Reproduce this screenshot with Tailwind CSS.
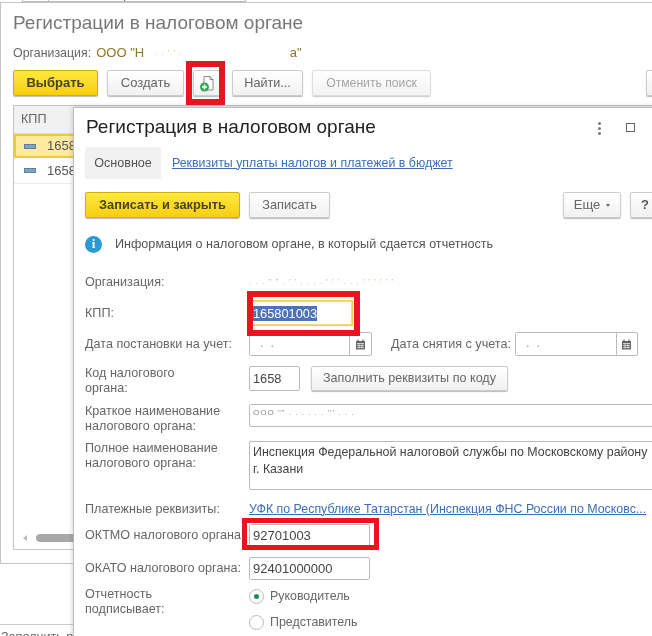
<!doctype html>
<html lang="ru"><head><meta charset="utf-8">
<script src="https://cdn.jsdelivr.net/npm/@tailwindcss/browser@4"></script>
</head>
<body class="bg-white">
<div class="relative w-[652px] h-[636px] overflow-hidden bg-white font-['Liberation_Sans',Arial,sans-serif] text-[12.6px] text-[#555] blur-[0.35px]">

  <!-- strip behind -->
  <div class="absolute left-[22px] top-[-10px] w-[224px] h-[12px] border border-[#bbb] flex text-[#666] overflow-hidden whitespace-nowrap leading-[10px]">
    <span class="w-[26px] border-r border-[#bbb]"></span>
    <span class="pl-[12px] text-[12px]">Заполнить реквизиты по КПП</span>
  </div>

  <!-- back window -->
  <div class="absolute left-0 top-[2px] w-[680px] h-[562px] border border-[#c4c4c4] bg-white pl-[12px] pt-[10px]">
    <div class="text-[19px] leading-[20px] text-[#787878]">Регистрации в налоговом органе</div>
    <div class="mt-[10px] h-[20px] flex items-center whitespace-nowrap"><span class="text-[#666] text-[12.4px]">Организация:</span><span class="ml-[5px] text-[#8f7424] text-[13px]">ООО "Н</span><span class="ml-[11px] text-[#c9b070] tracking-[1px] text-[8px]">. . ' ' .</span><span class="ml-[107px] text-[#8f7424] text-[13px]">а"</span></div>
    <div class="mt-[7px] flex items-start h-[26px] [&>*]:shrink-0">
      <div class="w-[85px] h-[26px] rounded-[2px] border border-[#d3ad0c] bg-gradient-to-b from-[#ffe83c] to-[#f6cf0a] shadow-[0_1px_1px_#bbb] flex items-center justify-center font-bold text-[13px] text-[#4a4320]">Выбрать</div>
      <div class="ml-[9px] w-[77px] h-[26px] rounded-[2px] border border-[#ccc] bg-gradient-to-b from-white to-[#f1f1f1] shadow-[0_1px_1px_#bbb] flex items-center justify-center text-[13px] text-[#666]">Создать</div>
      <div class="ml-[9px] w-[28px] h-[26px] rounded-[2px] border border-[#ccc] bg-gradient-to-b from-white to-[#f1f1f1] shadow-[0_1px_1px_#bbb] flex items-center justify-center">
        <svg width="16" height="17" viewBox="0 0 16 17"><path d="M5 1.500h6l3 3v10.500H5z" fill="#fff" stroke="#8a8a8a"/><path d="M11 1.500v3h3" fill="#e4e4e4" stroke="#8a8a8a"/><circle cx="5.500" cy="12" r="4.500" fill="#35a853"/><path d="M3 12h5M5.500 9.500v5" stroke="#fff" stroke-width="1.500"/></svg>
      </div>
      <div class="ml-[11px] w-[71px] h-[26px] rounded-[2px] border border-[#ccc] bg-gradient-to-b from-white to-[#f1f1f1] shadow-[0_1px_1px_#bbb] flex items-center justify-center text-[#666]">Найти...</div>
      <div class="ml-[9px] w-[119px] h-[26px] rounded-[2px] border border-[#ddd] bg-gradient-to-b from-white to-[#f3f3f3] shadow-[0_1px_1px_#ccc] flex items-center justify-center text-[12.2px] text-[#a5a5a5]">Отменить поиск</div>
      <div class="ml-[215px] w-[40px] h-[26px] rounded-[2px] border border-[#ccc] bg-gradient-to-b from-white to-[#f1f1f1] shadow-[0_1px_1px_#bbb]"></div>
    </div>
    <!-- table -->
    <div class="mt-[9px] w-[650px] h-[445px] border border-[#c4c4c4] relative">
      <div class="h-[28px] bg-[#f1f1f1] border-b border-[#ddd] pl-[7px] flex items-center text-[#666]">КПП</div>
      <div class="h-[24px] bg-[#fde9a0] border-2 border-[#f3c63f] flex items-center pl-[8px] text-[#555]"><span class="w-[12px] h-[5px] bg-[#7fa5c4] border border-[#5f7f9a]"></span><span class="ml-[11px] text-[13px]">1658</span></div>
      <div class="h-[26px] border-b border-[#eee] flex items-center pl-[10px] text-[#555]"><span class="w-[12px] h-[5px] bg-[#7fa5c4] border border-[#5f7f9a]"></span><span class="ml-[11px] text-[13px]">1658</span></div>
      <div class="absolute left-[9px] bottom-[7px] flex items-center">
        <span class="w-0 h-0 border-y-[3px] border-y-transparent border-r-[4px] border-r-[#bbb]"></span>
        <span class="ml-[9px] w-[60px] h-[8px] rounded-full bg-[#a8a8a8]"></span>
      </div>
    </div>
  </div>

  <!-- bottom strip -->
  <div class="absolute left-0 top-[624px] w-[73px] h-[20px] border-t border-[#ccc] pl-[1px] pt-[3px] text-[#666] whitespace-nowrap overflow-hidden">Заполнить ре</div>

  <!-- front window -->
  <div class="absolute left-[73px] top-[107px] w-[600px] h-[540px] bg-white border-t border-l border-[#bdbdbd] shadow-[0_0_6px_rgba(0,0,0,0.2)] pl-[11px] text-[#666]">
    <div class="h-[38px] flex items-center relative">
      <span class="ml-[1px] text-[19px] text-[#222]">Регистрация в налоговом органе</span>
      <span class="absolute left-[513px] top-[14px] flex flex-col gap-[2px]"><i class="block w-[3px] h-[3px] rounded-full bg-[#777]"></i><i class="block w-[3px] h-[3px] rounded-full bg-[#777]"></i><i class="block w-[3px] h-[3px] rounded-full bg-[#777]"></i></span>
      <span class="absolute left-[541px] top-[15px] w-[9px] h-[9px] border border-[#666]"></span>
    </div>
    <div class="flex items-center h-[32px] mt-[1px]">
      <div class="w-[76px] h-[32px] bg-[#f1f1f1] rounded-[2px] flex items-center justify-center text-[#555]">Основное</div>
      <a class="ml-[11px] text-[12.4px] text-[#3a6fb7] underline">Реквизиты уплаты налогов и платежей в бюджет</a>
    </div>
    <div class="flex mt-[13px] h-[26px]">
      <div class="w-[155px] rounded-[2px] border border-[#d3ad0c] bg-gradient-to-b from-[#ffe83c] to-[#f6cf0a] shadow-[0_1px_1px_#bbb] flex items-center justify-center font-bold text-[12.8px] text-[#4a4320]">Записать и закрыть</div>
      <div class="ml-[9px] w-[81px] rounded-[2px] border border-[#ccc] bg-gradient-to-b from-white to-[#f1f1f1] shadow-[0_1px_1px_#bbb] flex items-center justify-center text-[12.8px]">Записать</div>
      <div class="ml-[233px] w-[58px] rounded-[2px] border border-[#ccc] bg-gradient-to-b from-white to-[#f1f1f1] shadow-[0_1px_1px_#bbb] flex items-center justify-center gap-[6px] text-[13px]">Еще<span class="w-0 h-0 border-x-[2.500px] border-x-transparent border-t-[3px] border-t-[#666]"></span></div>
      <div class="ml-[9px] w-[40px] rounded-[2px] border border-[#ccc] bg-gradient-to-b from-white to-[#f1f1f1] shadow-[0_1px_1px_#bbb] flex items-center pl-[10px] font-bold text-[13px] text-[#555]">?</div>
    </div>
    <div class="flex items-center h-[18px] mt-[17px]">
      <span class="w-[17px] h-[17px] rounded-full bg-[#2a9bd0] text-white flex items-center justify-center font-['Liberation_Serif',serif] font-bold text-[13px]">i</span>
      <span class="ml-[13px] text-[#555]">Информация о налоговом органе, в который сдается отчетность</span>
    </div>

    <div class="flex items-center h-[20px] mt-[19px]">
      <span class="w-[164px]">Организация:</span>
      <span class="text-[#c9b070] text-[8px] tracking-[1px]">. . . " " . ' ' . . . . ' ' ' . . . ' ' ' ' ' '</span>
    </div>
    <div class="flex items-center h-[26px] mt-[8px]">
      <span class="w-[164px]">КПП:</span>
      <div class="w-[104px] h-[26px] border border-[#f3cd4d] shadow-[inset_0_0_0_1px_#f8dc7a] pl-[3px] flex items-center text-[12.8px]"><span class="bg-[#4d72b8] text-white leading-[15px]">165801003</span></div>
    </div>
    <div class="flex items-center h-[24px] mt-[6px]">
      <span class="w-[164px] whitespace-nowrap">Дата постановки на учет:</span>
      <div class="w-[123px] h-[24px] rounded-[2px] border border-[#bbb] flex">
        <span class="flex-1 pl-[10px] leading-[20px] text-[#999]">. &nbsp;.</span>
        <span class="w-[22px] border-l border-[#bbb] flex items-center justify-center">
          <svg width="11" height="11" viewBox="0 0 11 11"><path d="M1 2h9v8.500H1z" fill="#666"/><path d="M2 4.500h7M2 6.500h7M2 8.500h7M4 4v5.500M7 4v5.500" stroke="#eee" stroke-width=".7"/><path d="M3 .5v2M8 .5v2" stroke="#444"/></svg>
        </span>
      </div>
      <span class="ml-[19px] whitespace-nowrap">Дата снятия с учета:</span>
      <div class="ml-[4px] w-[123px] h-[24px] rounded-[2px] border border-[#bbb] flex">
        <span class="flex-1 pl-[10px] leading-[20px] text-[#999]">. &nbsp;.</span>
        <span class="w-[21px] border-l border-[#bbb] flex items-center justify-center">
          <svg width="11" height="11" viewBox="0 0 11 11"><path d="M1 2h9v8.500H1z" fill="#666"/><path d="M2 4.500h7M2 6.500h7M2 8.500h7M4 4v5.500M7 4v5.500" stroke="#eee" stroke-width=".7"/><path d="M3 .5v2M8 .5v2" stroke="#444"/></svg>
        </span>
      </div>
    </div>
    <div class="flex h-[32px] mt-[10px]">
      <span class="w-[164px] leading-[15px]">Код налогового<br>органа:</span>
      <div class="w-[51px] h-[25px] rounded-[2px] border border-[#bbb] pl-[3px] leading-[23px] text-[12.8px] text-[#444]">1658</div>
      <div class="ml-[11px] w-[197px] h-[25px] rounded-[2px] border border-[#ccc] bg-gradient-to-b from-white to-[#f1f1f1] shadow-[0_1px_1px_#bbb] flex items-center justify-center">Заполнить реквизиты по коду</div>
    </div>
    <div class="flex h-[37px] mt-[6px]">
      <span class="w-[164px] leading-[15px]">Краткое наименование<br>налогового органа:</span>
      <div class="w-[420px] h-[23px] border border-[#bbb] rounded-[2px] pl-[3px] text-[8px] leading-[16px] text-[#888] tracking-[1px]">ООО "" . . . . . . ''' . . .</div>
    </div>
    <div class="flex h-[48px]">
      <span class="w-[164px] leading-[15px]">Полное наименование<br>налогового органа:</span>
      <div class="w-[420px] h-[49px] border border-[#bbb] rounded-[2px] pl-[3px] pt-[2px] leading-[17px] text-[12.4px] text-[#444]">Инспекция Федеральной налоговой службы по Московскому району<br>г. Казани</div>
    </div>
    <div class="flex items-center h-[20px] mt-[10px] whitespace-nowrap">
      <span class="w-[164px]">Платежные реквизиты:</span>
      <a class="text-[12.4px] text-[#3a6fb7] underline">УФК по Республике Татарстан (Инспекция ФНС России по Московс...</a>
    </div>
    <div class="flex items-center h-[23px] mt-[5px]">
      <span class="w-[164px] whitespace-nowrap">ОКТМО налогового органа:</span>
      <div class="w-[121px] h-[23px] rounded-[2px] border border-[#bbb] pl-[3px] leading-[21px] text-[13px] text-[#444]">92701003</div>
    </div>
    <div class="flex items-center h-[23px] mt-[10px]">
      <span class="w-[164px] whitespace-nowrap">ОКАТО налогового органа:</span>
      <div class="w-[121px] h-[23px] rounded-[2px] border border-[#bbb] pl-[3px] leading-[21px] text-[13px] text-[#444]">92401000000</div>
    </div>
    <div class="flex mt-[7px]">
      <span class="w-[164px] leading-[15px]">Отчетность<br>подписывает:</span>
      <div class="flex flex-col gap-[10px] pt-[1px]">
        <label class="flex items-center h-[16px] gap-[6px] text-[12.4px]"><span class="w-[15px] h-[15px] rounded-full border border-[#bbb] flex items-center justify-center"><i class="block w-[5px] h-[5px] rounded-full bg-[#1f8a5a]"></i></span>Руководитель</label>
        <label class="flex items-center h-[16px] gap-[6px] text-[12.4px]"><span class="w-[15px] h-[15px] rounded-full border border-[#bbb]"></span>Представитель</label>
      </div>
    </div>
  </div>

  <!-- red highlights -->
  <div class="absolute left-[186px] top-[61px] w-[39px] h-[44px] border-[6px] border-[#e8141f]"></div>
  <div class="absolute left-[247px] top-[291px] w-[113px] h-[45px] border-[6px] border-[#e8141f]"></div>
  <div class="absolute left-[242px] top-[518px] w-[137px] h-[32px] border-[5px] border-[#e8141f]"></div>
</div>
</body></html>
